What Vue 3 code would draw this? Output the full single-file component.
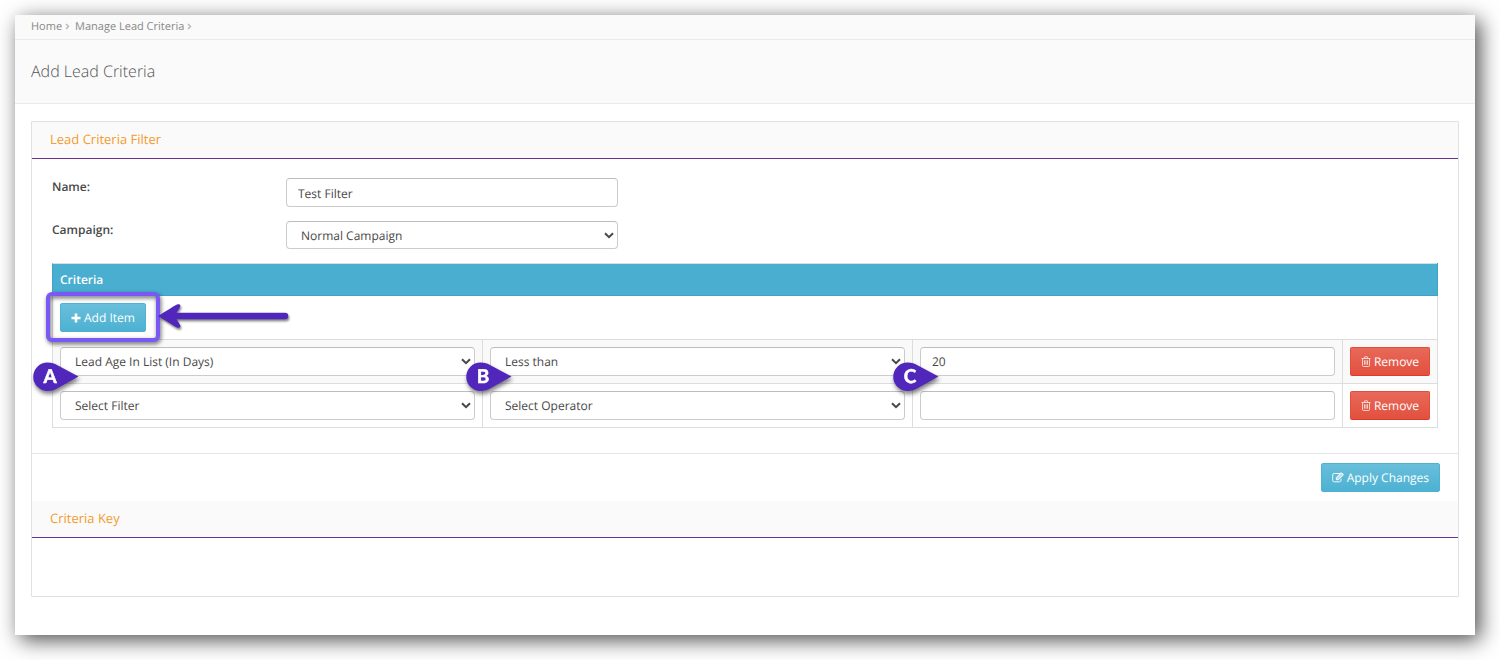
<script setup>
import { ref } from 'vue'

const name = ref('Test Filter')
const campaign = ref('Normal Campaign')
const rows = ref([
  { id: 1, filter: 'Lead Age In List (In Days)', operator: 'Less than', value: '20' },
  { id: 2, filter: 'Select Filter', operator: 'Select Operator', value: '' },
])
const filters = ['Select Filter', 'Lead Age In List (In Days)']
const operators = ['Select Operator', 'Less than']
const pinPath = 'M14.500 .5 C19 .5 21.500 1.500 24 3 L45.500 14.500 L24 26.500 C21.500 28 19 29 14.500 29 A14.250 14.250 0 0 1 14.500 .5Z'

let nextId = 3
function addItem() {
  rows.value.push({ id: nextId++, filter: filters[0], operator: operators[0], value: '' })
}
function removeItem(id) {
  rows.value = rows.value.filter((row) => row.id !== id)
}
</script>

<template>
  <main class="window">
    <nav class="crumbs" aria-label="Breadcrumb">
      <a href="#">Home</a>
      <svg viewBox="0 0 5 7"><path d="M1 1 3.500 3.500 1 6" /></svg>
      <a href="#">Manage Lead Criteria</a>
      <svg viewBox="0 0 5 7"><path d="M1 1 3.500 3.500 1 6" /></svg>
    </nav>
    <header class="heading"><h1>Add Lead Criteria</h1></header>

    <section class="panel">
      <h2 class="panel-title">Lead Criteria Filter</h2>
      <div class="panel-body">
        <div class="field name-field">
          <label for="name">Name:</label>
          <input id="name" v-model="name" class="control" type="text" />
        </div>
        <div class="field campaign-field">
          <label for="campaign">Campaign:</label>
          <div class="picker">
            <select id="campaign" v-model="campaign" class="control">
              <option>Normal Campaign</option>
            </select>
            <svg class="chevron" viewBox="0 0 10 7"><path d="M1 1.200 5 5.200 9 1.200" /></svg>
          </div>
        </div>

        <table>
          <colgroup><col /><col /><col /><col class="action-col" /></colgroup>
          <thead>
            <tr><th colspan="4" scope="col">Criteria</th></tr>
          </thead>
          <tbody>
            <tr>
              <td class="add-cell" colspan="4">
                <div class="add">
                  <button class="btn info" type="button" @click="addItem">
                    <svg class="plus" viewBox="0 0 10 10"><path d="M5 .5v9M.5 5h9" /></svg>Add Item
                  </button>
                  <span class="highlight"></span>
                  <svg class="arrow" viewBox="0 0 140 40">
                    <path d="M15 17 H128" stroke="#5026bb" stroke-width="6.500" stroke-linecap="round" />
                    <path d="M1 17 C8 13 15 8 20 5.500 C23 4.500 24.500 6.500 22.500 9 L17.500 17 L22.500 25 C24.500 28 23 29.500 20 28.500 C15 26 8 21 1 17Z" fill="#5026bb" />
                  </svg>
                </div>
              </td>
            </tr>
            <tr v-for="(row, i) in rows" :key="row.id" :class="{ striped: i % 2 === 0 }">
              <td>
                <div class="picker">
                  <select v-model="row.filter" class="control" aria-label="Filter">
                    <option v-for="f in filters" :key="f">{{ f }}</option>
                  </select>
                  <svg class="chevron" viewBox="0 0 10 7"><path d="M1 1.200 5 5.200 9 1.200" /></svg>
                </div>
                <svg v-if="i === 0" class="pin pin-a" viewBox="0 0 46 30">
                  <path :d="pinPath" /><text x="17" y="21">A</text>
                </svg>
              </td>
              <td>
                <div class="picker">
                  <select v-model="row.operator" class="control" aria-label="Operator">
                    <option v-for="o in operators" :key="o">{{ o }}</option>
                  </select>
                  <svg class="chevron" viewBox="0 0 10 7"><path d="M1 1.200 5 5.200 9 1.200" /></svg>
                </div>
                <svg v-if="i === 0" class="pin pin-b" viewBox="0 0 46 30">
                  <path :d="pinPath" /><text x="17" y="21">B</text>
                </svg>
              </td>
              <td>
                <input v-model="row.value" class="control" type="text" aria-label="Value" />
                <svg v-if="i === 0" class="pin pin-a" viewBox="0 0 46 30">
                  <path :d="pinPath" /><text x="17" y="21">C</text>
                </svg>
              </td>
              <td>
                <button class="btn danger" type="button" @click="removeItem(row.id)">
                  <svg class="trash" viewBox="0 0 10 11">
                    <path d="M.5 2.500h9M3.200 2.300 3.700.8h2.600l.5 1.500M1.500 2.700v6.600q0 1.200 1 1.200h5q1 0 1-1.200V2.700M3.500 4.300v4.400M5 4.300v4.400M6.500 4.300v4.400" />
                  </svg>Remove
                </button>
              </td>
            </tr>
          </tbody>
        </table>
      </div>
      <div class="actions">
        <button class="btn info" type="button">
          <svg class="edit" viewBox="0 0 12 11">
            <path d="M8 1.500H2.300Q.7 1.500.7 3v5.200q0 1.600 1.600 1.600h5.200q1.600 0 1.600-1.600V6.800" />
            <path class="pencil" d="M4.300 7.700v-2.200L9.300.6l2.200 2.200-5 4.900Z" />
          </svg>Apply Changes
        </button>
      </div>
      <h2 class="panel-title">Criteria Key</h2>
      <div class="key-body"></div>
    </section>
  </main>
</template>

<style>
body {
  margin: 0;
  background: #fff;
}
</style>

<style scoped>
* {
  box-sizing: border-box;
}
.window {
  margin: 15px 25px 25px 15px;
  padding-bottom: 38px;
  background: #fff;
  box-shadow: 5px 5px 20px rgba(0, 0, 0, 0.7);
  color: #484848;
  font: 12px/18px "Open Sans", sans-serif;
  text-rendering: geometricPrecision;
}
.crumbs {
  display: flex;
  align-items: center;
  height: 25px;
  padding: 0 16px 1px;
  border-bottom: 1px solid #ebebeb;
  background: #fafafa;
  font-size: 11px;
}
.crumbs a {
  color: #888;
  text-decoration: none;
}
.crumbs svg {
  width: 5px;
  height: 7px;
  margin: 0 5px 0 3px;
  fill: none;
  stroke: #bbb;
  stroke-width: 1.5;
}
.heading {
  display: flex;
  align-items: center;
  height: 64px;
  padding: 0 16px 2px;
  border-bottom: 1px solid #ebebeb;
  background: #fafafa;
}
h1 {
  margin: 0;
  color: #555;
  font-size: 16px;
  font-weight: 300;
  line-height: 24px;
}
.panel {
  margin: 17px 16px 0;
  border: 1px solid #e1e1e1;
  border-radius: 1px;
}
.panel-title {
  height: 37px;
  margin: 0;
  padding: 0 18px;
  border-bottom: 1px solid #6a3293;
  background: #fafafa;
  color: #f39c2d;
  font-size: 13px;
  font-weight: 400;
  line-height: 35px;
}
.panel-body {
  padding: 19px 20px 25px;
}
.field {
  display: grid;
  grid-template-columns: 234px minmax(0, 332px);
  margin-bottom: 14px;
}
.field label {
  font-weight: 600;
}
.control {
  display: block;
  width: 100%;
  height: 29px;
  margin: 0;
  padding: 0 11px;
  border: 1px solid #ccc;
  border-top-color: #bdbdbd;
  border-radius: 4px;
  background: #fff;
  color: #484848;
  font: inherit;
  text-rendering: inherit;
  appearance: none;
}
select.control {
  padding: 1px 24px 0 14px;
}
.name-field .control {
  padding-top: 2px;
}
.campaign-field .control {
  height: 28px;
  padding-top: 2px;
}
.picker {
  position: relative;
}
.chevron {
  position: absolute;
  top: 11px;
  right: 4px;
  width: 10px;
  height: 7px;
  fill: none;
  stroke: #484848;
  stroke-width: 2;
  pointer-events: none;
}
table {
  width: 100%;
  border-right: 1px solid #ddd;
  border-bottom: 1px solid #ddd;
  border-collapse: separate;
  border-spacing: 0;
  table-layout: fixed;
}
.action-col {
  width: 95px;
}
th {
  height: 33px;
  padding: 0 7px;
  border: 1px solid #3ea3c4;
  border-top-color: #d5dfe3;
  border-right: 0;
  background: #4aaed0;
  background-clip: padding-box;
  box-shadow: 1px 0 #3ea3c4;
  color: #fff;
  font-weight: 600;
  text-align: left;
}
td {
  position: relative;
  height: 44px;
  padding: 7px;
  border-top: 1px solid #ddd;
  border-left: 1px solid #ddd;
  vertical-align: top;
}
tbody .add-cell {
  z-index: 2;
  height: 43px;
  border-top: 0;
}
.striped td {
  background: #f9f9f9;
}
.btn {
  display: inline-flex;
  align-items: center;
  justify-content: center;
  gap: 3px;
  height: 29px;
  padding: 0 10px;
  border: 1px solid;
  border-radius: 2px;
  color: #fff;
  font: inherit;
  text-rendering: inherit;
  white-space: nowrap;
  vertical-align: top;
}
.btn svg {
  flex: none;
  fill: none;
  stroke: #fff;
}
.info {
  border-color: #4fb2d3;
  background: linear-gradient(#68bfdb, #4db1d2);
}
.danger {
  width: 100%;
  padding: 0;
  border-color: #e54c3a;
  border-bottom-color: #de3a29;
  background: linear-gradient(#e8695a, #e2503e);
}
.plus {
  width: 10px;
  height: 10px;
  stroke-width: 2.6;
}
.trash {
  width: 10px;
  height: 11px;
  opacity: 0.9;
  stroke-width: 0.8;
}
.edit {
  width: 12px;
  height: 11px;
  stroke-width: 0.9;
}
.btn .pencil {
  fill: #fff;
  fill-opacity: 0.6;
}
.add {
  position: relative;
  width: max-content;
}
.highlight {
  position: absolute;
  inset: -11px -14px -10px;
  border: 4px solid #7a58f5;
  border-radius: 6px;
  filter: drop-shadow(1px 2px 2px rgba(0, 0, 0, 0.6));
}
.highlight,
.arrow,
.pin {
  pointer-events: none;
}
.arrow {
  position: absolute;
  top: -4px;
  left: 97px;
  width: 140px;
  height: 40px;
  filter: drop-shadow(1px 2px 1px rgba(0, 0, 0, 0.5));
}
.pin {
  position: absolute;
  top: 22px;
  z-index: 3;
  width: 46px;
  height: 30px;
  overflow: visible;
  filter: drop-shadow(1px 3px 2px rgba(0, 0, 0, 0.5));
}
.pin path {
  fill: #5026bb;
}
.pin text {
  fill: #fff;
  stroke: #fff;
  stroke-width: 0.5;
  font: 700 19px Lato, sans-serif;
  text-anchor: middle;
}
.pin-a {
  left: -20px;
}
.pin-b {
  left: -17px;
}
.actions {
  display: flex;
  justify-content: flex-end;
  padding: 9px 18px;
  border-top: 1px solid #e5e5e5;
}
.key-body {
  height: 58px;
}
</style>
